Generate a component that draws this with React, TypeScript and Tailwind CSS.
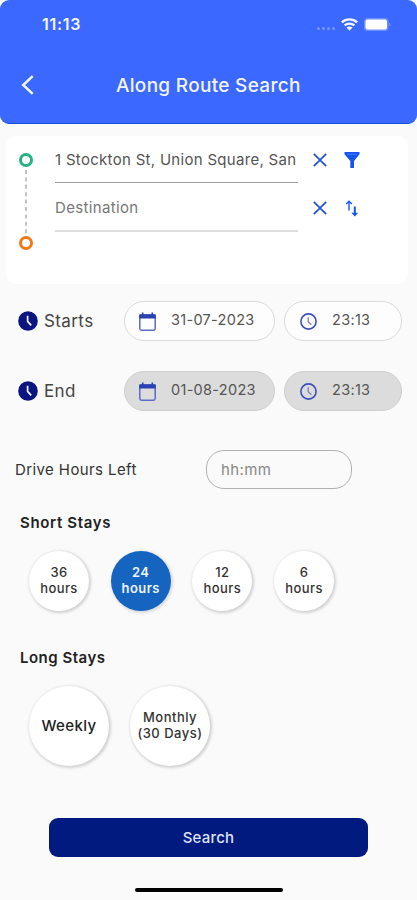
const shortStays = [
  { value: "36", selected: false },
  { value: "24", selected: true },
  { value: "12", selected: false },
  { value: "6", selected: false },
]

function StatusBar() {
  return (
    <div className="flex h-[48px] items-center pl-[42px] pr-[26px]">
      <span className="text-[16px] font-semibold leading-none tracking-[0.7px]">
        11:13
      </span>
      <div className="ml-auto flex items-center">
        <div className="mt-[9px] mr-[6px] flex gap-[2px]">
          <span className="size-[3px] rounded-full bg-white/30" />
          <span className="size-[3px] rounded-full bg-white/30" />
          <span className="size-[3px] rounded-full bg-white/30" />
          <span className="size-[3px] rounded-full bg-white/30" />
        </div>
        <svg className="mr-[6px] h-[13px] w-[17px]" viewBox="0 0 17 13" fill="none" stroke="currentColor" strokeWidth="2.4">
          <path d="M.9 4.3C5.1.4 11.9.4 16.1 4.3" />
          <path d="M3.6 7.4c2.8-2.5 7-2.5 9.8 0" strokeWidth="2.2" />
          <path d="M5.5 9.5c1.7-1.5 4.3-1.5 6 0l-3 3.2z" fill="currentColor" stroke="none" />
        </svg>
        <svg className="h-[13px] w-[27px]" viewBox="0 0 27 13">
          <rect x="0" y="0" width="24.5" height="13" rx="3.5" fill="white" fillOpacity=".25" />
          <rect x="1.5" y="1.5" width="21.5" height="10" rx="2" fill="white" />
          <path d="M25.3 4.5c1.5.6 1.5 3.4 0 4z" fill="white" fillOpacity=".4" />
        </svg>
      </div>
    </div>
  )
}

function CloseIcon() {
  return (
    <svg className="size-[14px]" viewBox="0 0 14 14" fill="none" stroke="#2450dc" strokeWidth="1.7">
      <path d="M.8.8l12.4 12.4M13.2.8L.8 13.2" />
    </svg>
  )
}

function FilterIcon() {
  return (
    <svg className="h-[16px] w-[16px]" viewBox="0 0 16 16" fill="#1554ee">
      <path d="M.5 0h15v2.2L10 9v7H6.3V9L.5 2.2z" />
      <path d="M3 2.2h10" stroke="#5c88f5" strokeWidth=".7" />
    </svg>
  )
}

function SwapIcon() {
  return (
    <svg className="h-[17px] w-[14px]" viewBox="0 0 14 17" fill="none" stroke="#1554ee">
      <path d="M4 10.5V2" strokeWidth="1.4" />
      <path d="M1.2 4L4 1.2 6.8 4" strokeWidth="1.4" />
      <path d="M9.8 6.5v8" strokeWidth="2" />
      <path d="M6.4 12.8h6.8l-3.4 3.8z" fill="#1554ee" stroke="none" />
    </svg>
  )
}

function SolidClock() {
  return (
    <svg className="size-[20px]" viewBox="0 0 20 20">
      <circle cx="10" cy="10" r="9.8" fill="#0a1580" />
      <path d="M9.6 4.8v5.6l3.6 4" fill="none" stroke="#f4f5ff" strokeWidth="1.7" />
    </svg>
  )
}

function CalendarIcon() {
  return (
    <svg className="h-[19px] w-[17px]" viewBox="0 0 17 19" fill="none" stroke="#5c6cc6">
      <rect x=".8" y="2.8" width="15.4" height="15.4" rx="1.6" strokeWidth="1.5" />
      <path d="M.2 2.5h16.6v4H.2z" fill="#2941b2" stroke="none" />
      <path d="M3.7.4v3M13.3.4v3" stroke="#2941b2" strokeWidth="1.6" />
    </svg>
  )
}

function ClockIcon() {
  return (
    <svg className="size-[17px]" viewBox="0 0 17 17" fill="none">
      <circle cx="8.5" cy="8.5" r="7.6" stroke="#3d50b8" strokeWidth="1.6" />
      <path d="M8.2 4.3v4.5l3.2 2.9" stroke="#7480c8" strokeWidth="1.3" />
    </svg>
  )
}

function DateRow({ label, date, time, muted }: { label: string; date: string; time: string; muted?: boolean }) {
  const pill = muted ? "border-[#cfcfcf] bg-[#dcdcdc]" : "border-[#dadada] bg-[#fdfdfd]"
  return (
    <div className="flex h-[40px] items-center pl-[18px]">
      <SolidClock />
      <span className="ml-[6px] w-[80px] pt-[2px] text-[17px] tracking-[0.4px] text-[#444]">{label}</span>
      <div className={`flex h-[40px] w-[151px] items-center rounded-full border pl-[14px] ${pill}`}>
        <CalendarIcon />
        <span className="ml-[15px] pb-[2px] text-[14.5px] tracking-[0.3px] text-[#555]">{date}</span>
      </div>
      <div className={`ml-[9px] flex h-[40px] w-[118px] items-center rounded-full border pl-[15px] ${pill}`}>
        <ClockIcon />
        <span className="ml-[15px] pb-[2px] text-[14.5px] tracking-[0.3px] text-[#555]">{time}</span>
      </div>
    </div>
  )
}

export default function App() {
  return (
    <div className="h-[900px] w-[417px] overflow-hidden bg-[#fafafa] font-['Inter','Liberation_Sans',sans-serif] text-[#222]">
      <div className="bg-white">
        <header className="h-[124px] rounded-[9px] border-b border-[#164ee0] bg-[#3b68ff] text-[#f3f5ff]">
          <StatusBar />
          <div className="mt-[17px] flex h-[40px] items-center pl-[21px]">
            <svg className="h-[20px] w-[13px]" viewBox="0 0 13 20" fill="none" stroke="currentColor" strokeWidth="2.5">
              <path d="M11.7 1.2L2.2 10l9.5 8.8" />
            </svg>
            <h1 className="ml-[82px] pt-[2px] text-[19px] font-medium tracking-[0.3px] whitespace-nowrap">Along Route Search</h1>
          </div>
        </header>
      </div>

      <section className="mt-[12px] ml-[6px] flex h-[148px] w-[402px] rounded-[10px] bg-white">
        <div className="ml-[13px] flex w-[14px] flex-col items-center pt-[17px]">
          <span className="size-[14px] rounded-full border-[3.5px] border-[#22b483]" />
          <svg className="h-[69px] w-[2px]" viewBox="0 0 2 69">
            <path d="M1 3v66" stroke="#aaa" strokeWidth="1.4" strokeDasharray="4 3.4" />
          </svg>
          <span className="size-[14px] rounded-full border-[3.5px] border-[#f27916]" />
        </div>
        <div className="ml-[22px] w-[243px]">
          <div className="flex h-[47px] items-center border-b border-[#a0a0a0] pt-[2px] text-[15px] tracking-[0.3px] whitespace-nowrap text-[#555]">
            1 Stockton St, Union Square, San
          </div>
          <div className="flex h-[49px] items-center border-b-2 border-[#dedede] pt-[4px] text-[15px] tracking-[0.35px] text-[#777]">
            Destination
          </div>
        </div>
        <div className="ml-[15px] grid h-[96px] grid-cols-[14px_16px] grid-rows-[48px_48px] items-center justify-items-center gap-x-[17px]">
          <CloseIcon />
          <FilterIcon />
          <CloseIcon />
          <SwapIcon />
        </div>
      </section>

      <section className="mt-[17px] flex flex-col gap-[30px]">
        <DateRow label="Starts" date="31-07-2023" time="23:13" />
        <DateRow label="End" date="01-08-2023" time="23:13" muted />
      </section>

      <div className="mt-[39px] flex h-[39px] items-center pl-[15px]">
        <span className="w-[191px] pt-[2px] text-[15px] tracking-[0.4px] text-[#333]">Drive Hours Left</span>
        <div className="flex h-[39px] w-[146px] items-center rounded-[18px] border border-[#b0b0b0] pt-[2px] pl-[14px] text-[15px] tracking-[0.4px] text-[#888]">
          hh:mm
        </div>
      </div>

      <h2 className="mt-[24px] pl-[20px] text-[15px] leading-[20px] font-semibold tracking-[0.65px]">Short Stays</h2>
      <div className="mt-[18px] flex gap-[21.7px] pl-[29px]">
        {shortStays.map((stay) => (
          <div
            key={stay.value}
            className={`flex size-[60px] flex-col items-center justify-center rounded-full pb-[2px] text-[13px] leading-[16px] tracking-[0.4px] ${
              stay.selected
                ? "bg-[#1565c0] font-semibold text-[#edf3ff] shadow-[1px_1px_3px_1px_rgba(0,0,0,0.13)]"
                : "bg-white font-medium text-[#333] shadow-[1px_1px_3px_1px_rgba(0,0,0,0.17)]"
            }`}
          >
            <span>{stay.value}</span>
            <span>hours</span>
          </div>
        ))}
      </div>

      <h2 className="mt-[37px] pl-[20px] text-[15px] leading-[20px] font-semibold tracking-[0.5px]">Long Stays</h2>
      <div className="mt-[18px] flex gap-[21px] pl-[29px]">
        <div className="flex size-[80px] items-center justify-center rounded-full bg-white text-[15px] font-medium tracking-[0.4px] shadow-[1px_1px_3px_1px_rgba(0,0,0,0.17)]">
          Weekly
        </div>
        <div className="flex size-[80px] flex-col items-center justify-center rounded-full bg-white pb-[2px] text-[13px] leading-[16px] font-medium tracking-[0.5px] whitespace-nowrap text-[#333] shadow-[1px_1px_3px_1px_rgba(0,0,0,0.17)]">
          <span>Monthly</span>
          <span>(30 Days)</span>
        </div>
      </div>

      <button className="mt-[52px] ml-[49px] flex h-[39px] w-[319px] items-center justify-center rounded-[9px] bg-[#001a80] pt-[1px] text-[15px] font-medium tracking-[0.2px] text-[#dfe3f8]">
        Search
      </button>
      <div className="mt-[31px] ml-[135px] h-[4px] w-[148px] rounded-full bg-black" />
    </div>
  )
}
